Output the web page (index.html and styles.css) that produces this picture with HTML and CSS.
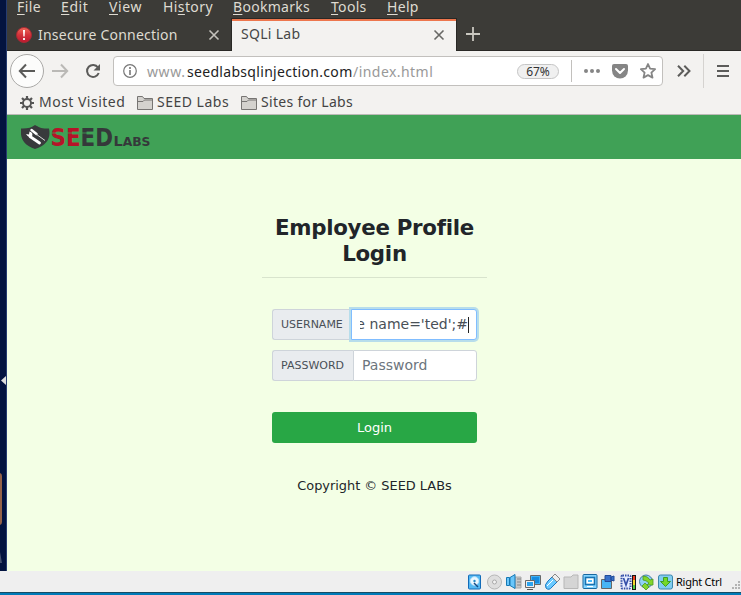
FILE: index.html
```html
<!DOCTYPE html>
<html lang="en">
<head>
<meta charset="utf-8">
<title>SQLi Lab</title>
<link rel="stylesheet" href="styles.css">
</head>
<body>
<div class="workspace">
  <aside class="launcher">
    <svg width="7" height="571" viewBox="0 0 7 571">
      <path d="M6 376v9L1 380.500z" fill="#ddd"/>
      <rect x="-6" y="473" width="8" height="52" rx="3" fill="#946248"/>
      <path d="M0 552l2 11H0z" fill="#465270"/>
      <path d="M6.500 0v571" stroke="#263c70"/>
    </svg>
  </aside>
  <div class="browser">
    <nav class="menubar">
      <span class="m-file"><u>F</u>ile</span><span class="m-edit"><u>E</u>dit</span><span class="m-view"><u>V</u>iew</span><span class="m-history">Hi<u>s</u>tory</span><span class="m-book"><u>B</u>ookmarks</span><span class="m-tools"><u>T</u>ools</span><span class="m-help"><u>H</u>elp</span>
    </nav>
    <div class="tabs">
      <div class="tab">
        <svg class="alert" width="16" height="16" viewBox="0 0 16 16"><defs><linearGradient id="red" x2="0" y2="1"><stop stop-color="#ef6a5a"/><stop offset=".5" stop-color="#d3323a"/><stop offset="1" stop-color="#bd1830"/></linearGradient></defs><circle cx="8" cy="8" r="7.500" fill="url(#red)" stroke="#a62932"/><path d="M7 3h2l-.4 6.500H7.400zM7.100 11h1.800v2H7.100z" fill="#fff"/></svg>
        <span class="t-insecure">Insecure Connection</span>
        <svg class="close" width="12" height="12" viewBox="0 0 12 12"><path d="M1.500 1.500l9 9m0-9l-9 9" stroke="#c4c2bc" stroke-width="1.600"/></svg>
      </div>
      <div class="tab active">
        <span class="t-sqli">SQLi Lab</span>
        <svg class="close" width="12" height="12" viewBox="0 0 12 12"><path d="M1.500 1.500l9 9m0-9l-9 9" stroke="#686865" stroke-width="1.600"/></svg>
      </div>
      <svg class="plus" width="14" height="14" viewBox="0 0 14 14"><path d="M0 7h14M7 0v14" stroke="#cac8c0" stroke-width="1.800"/></svg>
    </div>
    <div class="toolbar">
      <div class="back"><svg width="18" height="18" viewBox="0 0 18 18"><path d="M17 9H2M8 2.500L1.800 9 8 15.500" fill="none" stroke="#5b5b59" stroke-width="2"/></svg></div>
      <svg class="forward" width="18" height="18" viewBox="0 0 18 18"><path d="M1 9h15M10 2.500L16.200 9 10 15.500" fill="none" stroke="#bab9b6" stroke-width="2"/></svg>
      <svg class="reload" width="16" height="16" viewBox="0 0 16 16"><path d="M13 4.500A6 6 0 1 0 13.700 10" fill="none" stroke="#5b5b59" stroke-width="2"/><path d="M15 1v6.500H8.500z" fill="#5b5b59"/></svg>
      <div class="address">
        <svg class="info" width="14" height="14" viewBox="0 0 14 14"><circle cx="7" cy="7" r="6.300" fill="none" stroke="#777" stroke-width="1.200"/><path d="M7 6v5M7 3v2" stroke="#777" stroke-width="1.600"/></svg>
        <span class="u-www">www.</span><span class="u-host">seedlabsqlinjection.com</span><span class="u-path">/index.html</span>
        <span class="zoom">67%</span>
        <i class="rule"></i>
        <svg class="dots" width="16" height="4" viewBox="0 0 16 4" fill="#858585"><circle cx="2" cy="2" r="2"/><circle cx="8" cy="2" r="2"/><circle cx="14" cy="2" r="2"/></svg>
        <svg class="pocket" width="16" height="15" viewBox="0 0 16 15"><path d="M2 0h12q2 0 2 2v4.500a8 8 0 0 1-16 0V2q0-2 2-2z" fill="#858585"/><path d="M4 5l4 4 4-4" fill="none" stroke="#fff" stroke-width="2" stroke-linecap="round" stroke-linejoin="round"/></svg>
        <svg class="star" width="16" height="16" viewBox="0 0 16 16"><path d="M8 1l2.100 4.700 5 .5-3.700 3.400 1.100 5L8 12.100l-4.500 2.500 1.100-5L.9 6.200l5-.5z" fill="none" stroke="#858585" stroke-width="1.800" stroke-linejoin="round"/></svg>
      </div>
      <svg class="more" width="14" height="12" viewBox="0 0 14 12"><path d="M1 .7L6.200 6 1 11.300M7.300.7L12.500 6l-5.200 5.300" fill="none" stroke="#5c5c5a" stroke-width="2"/></svg>
      <i class="divider"></i>
      <svg class="menu" width="12" height="12" viewBox="0 0 12 12"><path d="M0 1h12M0 6h12M0 11h12" stroke="#5c5c5a" stroke-width="2"/></svg>
    </div>
    <div class="bookmarks">
      <svg class="gear" width="14" height="14" viewBox="0 0 14 14"><path d="M7 0v3M7 11v3M0 7h3M11 7h3M2 2l2.200 2.200M9.800 9.800L12 12M12 2L9.800 4.200M4.200 9.800L2 12" stroke="#555" stroke-width="2.200"/><circle cx="7" cy="7" r="4" fill="#f3f2f0" stroke="#555" stroke-width="1.900"/></svg>
      <span class="b-most">Most Visited</span>
      <svg class="folder" width="16" height="14" viewBox="0 0 16 14"><path d="M.5 13.500V.5h5l1.500 2h8.500v11z" fill="#d4d2ce" stroke="#777573"/><path d="M1 5.500h5l1.500-1.500h8" fill="none" stroke="#777573"/></svg>
      <span class="b-seed">SEED Labs</span>
      <svg class="folder" width="16" height="14" viewBox="0 0 16 14"><path d="M.5 13.500V.5h5l1.500 2h8.500v11z" fill="#d4d2ce" stroke="#777573"/><path d="M1 5.500h5l1.500-1.500h8" fill="none" stroke="#777573"/></svg>
      <span class="b-sites">Sites for Labs</span>
    </div>
    <header class="site-header">
      <svg width="132" height="26" viewBox="0 0 132 26">
        <path d="M14 0Q9 4 0 3.500C-1 13 2 20 14 24 26 20 30 13 28 3.500 20 4 18 2 14 0z" fill="#383a3c"/>
        <path d="M9 11.500l9.500 6.500" stroke="#fff" stroke-width="2.800" stroke-linecap="round"/><path d="M5 9l3 .5.500-3q4 1 2.500 5-4 1.500-6-2.500z" fill="#fff"/>
        <path d="M10.500 5l5 4" stroke="#fff" stroke-width="2.400" stroke-linecap="round"/><path d="M15 9l9 6.500" stroke="#ddd"/>
        <text class="brand" x="29.500" y="21" textLength="62.500" lengthAdjust="spacingAndGlyphs"><tspan class="crimson">SE</tspan>ED</text>
        <path d="M30 8h46" stroke="#40a156" stroke-width=".8"/>
        <text class="brand-small" x="92.500" y="21" textLength="37" lengthAdjust="spacingAndGlyphs">L<tspan class="caps">ABS</tspan></text>
      </svg>
    </header>
    <main class="page">
      <form class="login">
        <h1>Employee Profile Login</h1>
        <div class="field focused"><label>USERNAME</label><div class="input"><div class="value"><span>e name='ted';#</span></div><i class="caret"></i></div></div>
        <div class="field"><label>PASSWORD</label><div class="input placeholder">Password</div></div>
        <button type="button">Login</button>
        <p>Copyright © SEED LABs</p>
      </form>
    </main>
  </div>
</div>
<footer class="status">
  <svg width="206" height="18" viewBox="0 0 206 18">
    <g fill="none">
      <rect x="1.500" y="2" width="12" height="14" rx="1" fill="#55b9f3" stroke="#126bb8"/><circle cx="7.500" cy="8" r="4.200" fill="#edf8ff" stroke="#c5e6fa"/><circle cx="7.500" cy="8" r="1.200" fill="#258ac7"/><path d="M7 10l4 4" stroke="#154780" stroke-width="1.500"/>
      <circle cx="27.500" cy="9" r="7" fill="#dedede" stroke="#b7b7b7"/><circle cx="27.500" cy="9" r="2" fill="#f4f4f4" stroke="#aaa"/>
      <path d="M48 4h6v11h-6z" fill="#c8c8c8" stroke="#aaa"/><path d="M50 6h4M50 9h4M50 12h4" stroke="#888"/><path d="M39.500 4.500h3v8h-3zM43 4.500l5-3v14l-5-3z" fill="#69c6fa" stroke="#1678b4"/>
      <path d="M63.500 2.500h10v9h-10z" fill="#3fb1f5" stroke="#686868"/><path d="M65 4h7v6h-7z" fill="#168be0"/><path d="M58.500 7.500h9v7h-9z" fill="#eee" stroke="#686868"/><path d="M60 9h6v4h-6z" fill="#2ba4f0"/><path d="M60 16.500h6" stroke="#555"/>
      <path d="M79 15q-2-3 2-7l4-4 5 5-5 5q-3 4-6 1z" fill="#6ccaff" stroke="#1977c1"/><path d="M85 4l3-3 5 5-3 3z" fill="#eee" stroke="#888"/><path d="M80 13l6-6" stroke="#fff"/>
      <path d="M97 15.500V4h7l2-2h5v13.500z" fill="#d5d5d5" stroke="#b7b7b7"/>
      <rect x="116" y="1.500" width="14" height="14" rx="1" fill="#86d4ff" stroke="#17679f"/><rect x="118.500" y="4.500" width="9" height="7" fill="#fff" stroke="#1672b3" stroke-width="1.600"/><path d="M121 7h4v2h-4z" fill="#4cbafa"/><path d="M120 13.500h6" stroke="#fff"/>
      <path d="M134.500 6.500h10v9h-10z" fill="#48b5f5" stroke="#666"/><path d="M138 2.500h6v6h-6zM144 4l3-1v5l-3-1z" fill="#3870ca" stroke="#234b99"/>
      <rect x="154.500" y="2.500" width="9" height="13" rx="1" fill="#e7edff" stroke="#354fa8" stroke-width="2" stroke-dasharray="1.500 1"/><path d="M156.500 5l2.500 7 2.500-7" stroke="#354fa8" stroke-width="1.700"/><path d="M165 2h4v15h-4z" fill="#161616"/><path d="M166 3h2v5h-2z" fill="#f23b21"/><path d="M166 7h2v5h-2z" fill="#f6d32e"/><path d="M166 12h2v4h-2z" fill="#50c940"/>
      <circle cx="179" cy="8.500" r="6.500" fill="#8fd2f5" stroke="#4680a5"/><path d="M176 3q5 0 7 4l3-1v6h-6l2-2q-3-3-6-3zM178 10l4 4-3 3-4-4z" fill="#84d62c" stroke="#4a9725" stroke-width=".8"/>
      <rect x="191.500" y="2" width="14" height="14" rx="2" fill="#82cdf0" stroke="#3c86ad"/><path d="M196.500 4.500h4v4h3l-5 5-5-5h3z" fill="#75d827" stroke="#3d9c27"/>
    </g>
  </svg>
  <span>Right Ctrl</span>
  <svg class="grip" width="8" height="9" viewBox="0 0 8 9" fill="#b3b3b3"><path d="M6 0h2v2H6zM3 3h2v2H3zM6 3h2v2H6zM0 6h2v2H0zM3 6h2v2H3zM6 6h2v2H6z"/></svg>
</footer>
<div class="desktop-edge"></div>
</body>
</html>
```

FILE: styles.css
```css
* { box-sizing: border-box; }
body { margin: 0; width: 741px; height: 595px; overflow: hidden; font-family: "Noto Sans", sans-serif; }
svg { display: block; flex: none; }
.workspace { display: flex; height: 571px; }
.launcher { width: 7px; background: #03133f; overflow: hidden; }
.browser { width: 734px; display: flex; flex-direction: column; }
.browser span { white-space: nowrap; flex: none; }

.menubar { height: 18px; background: #3c3b37; color: #dfdbd2; display: flex; padding-left: 10px; font-size: 14px; line-height: 14px; }
.menubar u { text-decoration-thickness: 1px; text-underline-offset: 2px; }
.m-file { width: 44px; letter-spacing: .4px; }
.m-edit { width: 48px; letter-spacing: .6px; }
.m-view { width: 54px; letter-spacing: .6px; }
.m-history { width: 70px; letter-spacing: .4px; }
.m-book { width: 98px; letter-spacing: .3px; }
.m-tools { width: 56px; letter-spacing: .3px; }
.m-help { letter-spacing: .3px; }

.tabs { height: 33px; background: #3c3b37; display: flex; border-bottom: 1px solid #292825; }
.tab { width: 224px; height: 33px; display: flex; align-items: center; padding: 0 11px 0 9px; color: #dfdbd2; font-size: 14px; }
.tab span { margin-bottom: 1px; }
.tab .close { margin-left: auto; }
.tab .alert { margin-right: 6px; }
.tab.active { width: 226px; background: #f3f2f0; color: #464646; border: 1px solid #292825; border-width: 1px 1px 0; box-shadow: inset 0 2px #ed764d; }
.tab .t-sqli { letter-spacing: .3px; margin-bottom: 3px; }
.plus { margin: 9px 0 0 9px; }
.t-insecure { letter-spacing: .22px; }

.toolbar { height: 40px; background: #f3f2f0; display: flex; align-items: center; }
.back { width: 34px; height: 34px; margin-left: 3px; background: #fcfcfb; border: 1px solid #aaa9a7; border-radius: 50%; display: grid; place-items: center; }
.forward { margin-left: 7px; }
.reload { margin-left: 16px; }
.address { width: 550px; height: 30px; margin-left: 12px; border: 1px solid #c2c0bd; border-radius: 4px; background: #fff; display: flex; align-items: center; font-size: 14px; color: #999; padding-left: 9px; }
.info { margin-right: 10px; }
.u-www { width: 40px; letter-spacing: .6px; }
.u-host { width: 166px; color: #222; letter-spacing: .31px; }
.u-path { width: 80px; letter-spacing: .45px; }
.zoom { width: 42px; height: 15px; margin-left: 84px; border: 1px solid #c5c5c5; border-radius: 8px; background: #f0f0f0; color: #333; font-size: 12px; line-height: 13px; text-align: center; }
.rule { width: 1px; height: 22px; margin-left: 12px; background: #c2c0bd; }
.dots { margin-left: 12px; }
.pocket { margin-left: 12px; }
.star { margin-left: 12px; }
.more { margin-left: 14px; }
.divider { width: 1px; height: 34px; margin-left: 12px; background: #d5d3d0; }
.menu { margin-left: 13px; }

.bookmarks { height: 24px; background: #f3f2f0; border-bottom: 1px solid #bcbab7; display: flex; align-items: center; padding-left: 13px; color: #444; font-size: 14px; }
.bookmarks span { margin-bottom: 2px; }
.gear { margin-right: 5px; }
.b-most { width: 98px; letter-spacing: .48px; }
.folder { margin-right: 4px; }
.b-seed { width: 84px; letter-spacing: .5px; }
.b-sites { letter-spacing: .3px; }

.site-header { height: 44px; background: #40a156; padding: 10px 0 0 14px; }
.brand { font: bold 24.500px "DejaVu Sans", sans-serif; fill: #35383a; }
.crimson { fill: #b61328; }
.brand-small { font: bold 14px "DejaVu Sans", sans-serif; fill: #35383a; }
.caps { font-size: 12px; }

.page { flex: 1; background: #f3ffe5; font-family: "DejaVu Sans", sans-serif; color: #212529; }
.login { width: 225px; margin: 56px 0 0 255px; padding: 0 10px; }
h1 { margin: 0 -10px 31px; height: 63px; font-size: 21.330px; letter-spacing: -.28px; line-height: 26px; text-align: center; border-bottom: 1px solid #d8e4cd; }
.field { height: 31px; margin-bottom: 10px; display: flex; }
label { flex: none; padding: 0 8px; border: 1px solid #ced4da; border-right: 0; border-radius: 3px 0 0 3px; background: #e9ecef; color: #495057; font-size: 11px; line-height: 29px; }
.field:not(.focused) label { width: 81px; }
.focused label { width: 79px; }
.input { flex: 1; min-width: 0; border: 1px solid #ced4da; border-radius: 0 3px 3px 0; background: #fff; color: #495057; font-size: 14px; line-height: 29px; padding: 0 8px; }
.focused .input { display: flex; align-items: center; border-color: #80bdff; box-shadow: 0 0 0 2px #b7ddeb; }
.value { flex: 1; min-width: 0; overflow: hidden; display: flex; justify-content: flex-end; }
.caret { width: 1px; height: 16px; margin-right: -1px; background: #222; }
.placeholder { color: #6c757d; }
button { display: block; width: 205px; height: 31px; margin: 31px 0 34px; border: 0; border-radius: 3px; background: #28a745; color: #fff; font: 13px "DejaVu Sans", sans-serif; }
p { margin: 0; font-size: 12.900px; line-height: 18px; text-align: center; white-space: nowrap; }

.status { height: 21px; background: #efefef; display: flex; align-items: center; padding-left: 467px; font: 11px "Noto Sans", sans-serif; color: #000; }
.status span { margin-left: 3px; white-space: nowrap; letter-spacing: -.25px; }
.grip { margin: 8px 1px 0 auto; }
.desktop-edge { height: 3px; background: #007ab7; border-top: 1px solid #174c65; }
```
